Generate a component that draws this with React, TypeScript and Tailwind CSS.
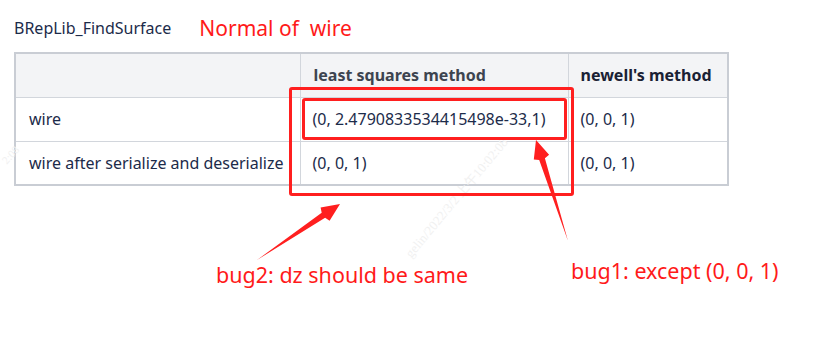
import React from "react";

type Row = {
  label: string;
  lsq: string;
  newell: string;
};

const rows: Row[] = [
  { label: "wire", lsq: "(0, 2.4790833534415498e-33,1)", newell: "(0, 0, 1)" },
  { label: "wire after serialize and deserialize", lsq: "(0, 0, 1)", newell: "(0, 0, 1)" },
];

const font = { fontFamily: '"Noto Sans", "Open Sans", "Noto Sans CJK SC", sans-serif' };

function Arrow({ x1, y1, x2, y2 }: { x1: number; y1: number; x2: number; y2: number }) {
  // tapered arrow: thin tail widening toward a barbed head
  const dx = x2 - x1;
  const dy = y2 - y1;
  const len = Math.hypot(dx, dy);
  const ux = dx / len;
  const uy = dy / len;
  const nx = -uy;
  const ny = ux;
  const headLen = 20;
  const bx = x2 - ux * headLen;
  const by = y2 - uy * headLen;
  const p = (x: number, y: number) => `${x.toFixed(1)},${y.toFixed(1)}`;
  const pts = [
    p(x1, y1),
    p(bx + nx * 3, by + ny * 3),
    p(bx + nx * 8 + ux * 2, by + ny * 8 + uy * 2),
    p(x2, y2),
    p(bx - nx * 8 + ux * 2, by - ny * 8 + uy * 2),
    p(bx - nx * 3, by - ny * 3),
  ].join(" ");
  return <polygon points={pts} fill="#ff1f1f" />;
}

export default function App() {
  return (
    <div className="relative w-[828px] h-[338px] bg-white overflow-hidden" style={font}>
      <div className="flex items-center gap-[28px] pl-[14px] h-[52px] pt-[4px]">
        <span className="text-[16px] text-[#1c2b4a]">BRepLib_FindSurface</span>
        <span className="text-[21px] text-[#ff1a1a] leading-none">Normal of&nbsp; wire</span>
      </div>

      <table className="ml-[14px] border-collapse border-2 border-[#c9cdd4] text-[16px] text-[#1c2b4a]">
        <thead>
          <tr className="h-[44px] bg-[#f3f4f6]">
            <th className="w-[285px] border border-[#d2d6dc]"></th>
            <th className="w-[268px] border border-[#d2d6dc] text-left pl-[13px] font-bold text-[#3d4450]">
              least squares method
            </th>
            <th className="w-[160px] border border-[#d2d6dc] text-left pl-[12px] font-bold text-[#1a2134]">
              newell's method
            </th>
          </tr>
        </thead>
        <tbody>
          {rows.map((r) => (
            <tr key={r.label} className="h-[44px]">
              <td className="border border-[#d2d6dc] pl-[13px] whitespace-nowrap">{r.label}</td>
              <td className="border border-[#d2d6dc] pl-[12px] whitespace-nowrap">{r.lsq}</td>
              <td className="border border-[#d2d6dc] pl-[12px] whitespace-nowrap">{r.newell}</td>
            </tr>
          ))}
        </tbody>
      </table>

      {/* faint watermarks */}
      <span
        className="absolute left-[408px] top-[246px] text-[13px] text-[#f1f1f1] whitespace-nowrap origin-left -rotate-[50deg]"
        style={{ fontFamily: '"Liberation Serif", "Noto Sans CJK SC", serif' }}
      >
        gelin/2022/3/2 上午10:02:08
      </span>
      <span
        className="absolute left-[4px] top-[154px] text-[11px] text-[#f1f1f1] whitespace-nowrap origin-left -rotate-[48deg]"
        style={{ fontFamily: '"Liberation Serif", serif' }}
      >
        2:08
      </span>

      {/* red annotation boxes */}
      <div className="absolute left-[289px] top-[87px] w-[285px] h-[109px] border-[3px] border-[#ff1f1f] rounded-[3px]" />
      <div className="absolute left-[302px] top-[98px] w-[265px] h-[42px] border-[3px] border-[#ff1f1f] rounded-[3px]" />

      <svg className="absolute left-0 top-0" width="828" height="338">
        <Arrow x1={257} y1={260} x2={340} y2={204} />
        <Arrow x1={568} y1={241} x2={536} y2={140} />
      </svg>

      <span className="absolute left-[216px] top-[264px] text-[21.5px] text-[#ff1a1a] leading-none whitespace-nowrap">
        bug2: dz should be same
      </span>
      <span className="absolute left-[571px] top-[260px] text-[21.5px] text-[#ff1a1a] leading-none whitespace-nowrap">
        bug1: except (0, 0, 1)
      </span>
    </div>
  );
}
